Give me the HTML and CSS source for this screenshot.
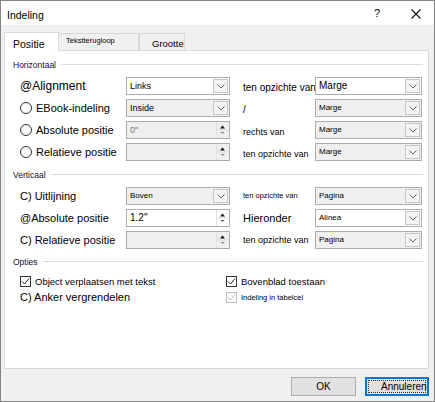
FILE: index.html
```html
<!DOCTYPE html>
<html lang="nl">
<head>
    <meta charset="UTF-8">
    <meta name="viewport" content="width=device-width, initial-scale=1.0">
    <title>Indeling</title>
    <link rel="stylesheet" href="styles.css">
</head>
<body>
<div class="dialog">
    <div class="titlebar">
        <span class="title">Indeling</span>
        <span class="help">?</span>
        <svg class="close" width="10" height="10" viewBox="0 0 10 10"><path d="M0.5 0.5L9.5 9.5M9.5 0.5L0.5 9.5" stroke="#111" stroke-width="1.1"/></svg>
    </div>
    <div class="content">
        <div class="tabs">
            <div class="tab active">Positie</div>
            <div class="tab tab-wrap">Tekstterugloop</div>
            <div class="tab tab-size">Grootte</div>
        </div>
        <div class="panel">
            <!-- horizontaal -->
            <div class="group-head"><span>Horizontaal</span><span class="rule"></span></div>
            <div class="rows">
                <div class="row">
                    <span class="lbl big">@Alignment</span>
                    <div class="select"><span class="val">Links</span><span class="drop"><svg width="8" height="5" viewBox="0 0 8 5"><path d="M0.5 0.5L4 4L7.5 0.5" fill="none" stroke="#666"/></svg></span></div>
                    <span class="mid m10">ten opzichte van</span>
                    <div class="select"><span class="val v10">Marge</span><span class="drop"><svg width="8" height="5" viewBox="0 0 8 5"><path d="M0.5 0.5L4 4L7.5 0.5" fill="none" stroke="#666"/></svg></span></div>
                </div>
                <div class="row">
                    <span class="lbl"><span class="radio"></span>EBook-indeling</span>
                    <div class="select off"><span class="val">Inside</span><span class="drop"><svg width="8" height="5" viewBox="0 0 8 5"><path d="M0.5 0.5L4 4L7.5 0.5" fill="none" stroke="#666"/></svg></span></div>
                    <span class="mid m10">/</span>
                    <div class="select off"><span class="val v8">Marge</span><span class="drop"><svg width="8" height="5" viewBox="0 0 8 5"><path d="M0.5 0.5L4 4L7.5 0.5" fill="none" stroke="#666"/></svg></span></div>
                </div>
                <div class="row">
                    <span class="lbl"><span class="radio"></span>Absolute positie</span>
                    <div class="spin off"><span class="val dim">0"</span><span class="arrows"><svg width="11" height="16" viewBox="0 0 11 16"><path d="M3 6.5h5L5.5 3.5z" fill="#111"/><path d="M0 8h11" stroke="#d6d6d6"/><path d="M3.5 10h4L5.5 12z" fill="#888"/></svg></span></div>
                    <span class="mid m9">rechts van</span>
                    <div class="select off"><span class="val v8">Marge</span><span class="drop"><svg width="8" height="5" viewBox="0 0 8 5"><path d="M0.5 0.5L4 4L7.5 0.5" fill="none" stroke="#666"/></svg></span></div>
                </div>
                <div class="row">
                    <span class="lbl"><span class="radio"></span>Relatieve positie</span>
                    <div class="spin off"><span class="val"></span><span class="arrows"><svg width="11" height="16" viewBox="0 0 11 16"><path d="M3 6.5h5L5.5 3.5z" fill="#111"/><path d="M0 8h11" stroke="#d6d6d6"/><path d="M3.5 10h4L5.5 12z" fill="#888"/></svg></span></div>
                    <span class="mid m9">ten opzichte van</span>
                    <div class="select off"><span class="val v8">Marge</span><span class="drop"><svg width="8" height="5" viewBox="0 0 8 5"><path d="M0.5 0.5L4 4L7.5 0.5" fill="none" stroke="#666"/></svg></span></div>
                </div>
            </div>

            <!-- verticaal -->
            <div class="group-head vert"><span>Verticaal</span><span class="rule"></span></div>
            <div class="rows">
                <div class="row centered">
                    <span class="lbl">C) Uitlijning</span>
                    <div class="select off"><span class="val v8">Boven</span><span class="drop"><svg width="8" height="5" viewBox="0 0 8 5"><path d="M0.5 0.5L4 4L7.5 0.5" fill="none" stroke="#666"/></svg></span></div>
                    <span class="mid m7">ten opzichte van</span>
                    <div class="select off"><span class="val v8">Pagina</span><span class="drop"><svg width="8" height="5" viewBox="0 0 8 5"><path d="M0.5 0.5L4 4L7.5 0.5" fill="none" stroke="#666"/></svg></span></div>
                </div>
                <div class="row centered">
                    <span class="lbl">@Absolute positie</span>
                    <div class="spin"><span class="val v10">1.2"</span><span class="arrows"><svg width="11" height="16" viewBox="0 0 11 16"><path d="M3 6.5h5L5.5 3.5z" fill="#111"/><path d="M0 8h11" stroke="#d6d6d6"/><path d="M3.5 10h4L5.5 12z" fill="#555"/></svg></span></div>
                    <span class="mid m12">Hieronder</span>
                    <div class="select"><span class="val v8">Alinea</span><span class="drop"><svg width="8" height="5" viewBox="0 0 8 5"><path d="M0.5 0.5L4 4L7.5 0.5" fill="none" stroke="#666"/></svg></span></div>
                </div>
                <div class="row centered">
                    <span class="lbl">C) Relatieve positie</span>
                    <div class="spin off"><span class="val"></span><span class="arrows"><svg width="11" height="16" viewBox="0 0 11 16"><path d="M3 6.5h5L5.5 3.5z" fill="#111"/><path d="M0 8h11" stroke="#d6d6d6"/><path d="M3.5 10h4L5.5 12z" fill="#888"/></svg></span></div>
                    <span class="mid m9">ten opzichte van</span>
                    <div class="select off"><span class="val v8">Pagina</span><span class="drop"><svg width="8" height="5" viewBox="0 0 8 5"><path d="M0.5 0.5L4 4L7.5 0.5" fill="none" stroke="#666"/></svg></span></div>
                </div>
            </div>

            <!-- opties -->
            <div class="group-head opts"><span>Opties</span><span class="rule"></span></div>
            <div class="options">
                <span class="opt"><span class="check"><svg width="11" height="11" viewBox="0 0 11 11"><path d="M2 5.5L4.5 8L9 2.5" fill="none" stroke="#222"/></svg></span><span class="o9">Object verplaatsen met tekst</span></span>
                <span class="opt"><span class="check"><svg width="11" height="11" viewBox="0 0 11 11"><path d="M2 5.5L4.5 8L9 2.5" fill="none" stroke="#222"/></svg></span><span class="o9">Bovenblad toestaan</span></span>
                <span class="opt o11">C) Anker vergrendelen</span>
                <span class="opt"><span class="check disabled"><svg width="11" height="11" viewBox="0 0 11 11"><path d="M2 5.5L4.5 8L9 2.5" fill="none" stroke="#bdbdbd"/></svg></span><span class="o7">Indeling in tabelcel</span></span>
            </div>
        </div>
        <div class="buttons">
            <div class="btn">OK</div>
            <div class="btn default"><span class="focus">Annuleren</span></div>
        </div>
    </div>
</div>
</body>
</html>
```

FILE: styles.css
```css
* {
    box-sizing: border-box;
}
body {
    margin: 0;
    font-family: "Liberation Sans", Arial, sans-serif;
    color: #000;
    background: #fff;
}
.dialog {
    width: 435px;
    height: 402px;
    border: 1px solid #858585;
    display: flex;
    flex-direction: column;
    background: #f0f0f0;
}
.titlebar {
    height: 24px;
    background: #fff;
    display: flex;
    align-items: flex-start;
    padding: 8px 13px 0 6px;
}
.title {
    flex: 1;
    font-size: 10.5px;
    line-height: 12px;
}
.help {
    font-size: 11px;
    line-height: 12px;
    margin-top: -2px;
    margin-right: 31px;
}
.close {
    display: block;
    margin-top: 0;
}
.content {
    flex: 1;
    padding: 7px 5px 0 3px;
}

/* tabs */
.tabs {
    display: flex;
    height: 18px;
}
.tab {
    border: 1px solid #d9d9d9;
    border-bottom: none;
    background: #f0f0f0;
    height: 17px;
    margin-top: 1px;
    overflow: hidden;
    white-space: nowrap;
}
.tab.active {
    width: 55px;
    height: 19px;
    margin-top: 0;
    background: #fff;
    position: relative;
    z-index: 1;
    font-size: 10.5px;
    line-height: 22px;
    padding-left: 8px;
}
.tab-wrap {
    width: 80px;
    border-left: none;
    font-size: 7.5px;
    line-height: 14px;
    padding-left: 7px;
}
.tab-size {
    width: 46px;
    font-size: 9.5px;
    line-height: 20px;
    padding-left: 12px;
}

/* panel */
.panel {
    height: 319px;
    border: 1px solid #d9d9d9;
    background: #fff;
    padding: 9px 5px 0 0;
}
.group-head {
    display: flex;
    align-items: center;
    height: 10px;
    padding-left: 8px;
    font-size: 8.5px;
    color: #111133;
    margin-bottom: 7px;
}
.group-head .rule {
    flex: 1;
    border-top: 1px solid #dcdcdc;
    margin-left: 5px;
    margin-top: -1px;
}
.group-head.vert {
    margin-top: 9px;
}
.group-head.opts {
    margin-top: 8px;
}
.rows {
    display: flex;
    flex-direction: column;
    gap: 4px;
    padding-left: 15px;
}
.row {
    display: grid;
    grid-template-columns: 106px 104px 85px 107px;
    height: 18px;
    align-items: center;
}
.lbl {
    display: flex;
    align-items: center;
    font-size: 11px;
    white-space: nowrap;
}
.lbl.big {
    font-size: 12px;
}
.radio {
    width: 12px;
    height: 12px;
    border: 1px solid #333;
    border-radius: 50%;
    background: #fff;
    margin-right: 4px;
}
.mid {
    padding-left: 13px;
    white-space: nowrap;
    align-self: end;
    line-height: 14px;
}
.row.centered .mid {
    align-self: center;
}
.m7 { font-size: 7.5px; }
.m9 { font-size: 9px; }
.m10 { font-size: 10px; }
.m12 { font-size: 11px; }

/* selects and spin fields */
.select, .spin {
    display: flex;
    height: 18px;
    border: 1px solid #adadad;
    background: #fff;
}
.select.off, .spin.off {
    background: #efefef;
}
.val {
    flex: 1;
    font-size: 9px;
    line-height: 16px;
    padding-left: 3px;
    white-space: nowrap;
    overflow: hidden;
}
.v8 { font-size: 8px; }
.v10 { font-size: 10px; }
.dim { color: #777; }
.drop {
    width: 15px;
    margin: 1px;
    border: 1px solid #c6c6c6;
    background: #f4f4f4;
    display: flex;
    align-items: center;
    justify-content: center;
}
.arrows {
    width: 12px;
    margin: 0 1px 0 0;
    border-left: 1px solid #e0e0e0;
    display: flex;
    align-items: center;
    justify-content: center;
}
.arrows svg {
    display: block;
}

/* options */
.options {
    display: grid;
    grid-template-columns: 206px 1fr;
    row-gap: 2px;
    padding-left: 15px;
}
.opt {
    display: flex;
    align-items: center;
    height: 14px;
    white-space: nowrap;
}
.check {
    width: 11px;
    height: 11px;
    border: 1px solid #333;
    background: #fff;
    margin-right: 4px;
    display: flex;
}
.check svg {
    margin: -1px;
}
.check.disabled {
    border-color: #bcbcbc;
}
.o9 { font-size: 9.5px; }
.o7 { font-size: 7.5px; }
.o11 { font-size: 11px; }

/* footer buttons */
.buttons {
    display: flex;
    justify-content: flex-end;
    gap: 9px;
    margin-top: 8px;
}
.btn {
    height: 19px;
    width: 65px;
    border: 1px solid #adadad;
    background: #e1e1e1;
    font-size: 10px;
    line-height: 17px;
    text-align: center;
}
.btn.default {
    width: 64px;
    border: 2px solid #0078d7;
    padding: 1px;
    line-height: 11px;
}
.btn.default .focus {
    display: block;
    height: 13px;
    border: 1px dotted #333;
    padding-left: 12px;
    text-align: left;
}
```
